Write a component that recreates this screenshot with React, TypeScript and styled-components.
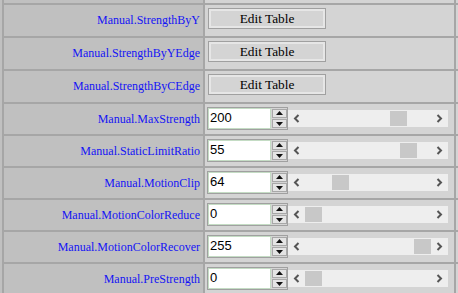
import React from 'react';
import styled, { createGlobalStyle } from 'styled-components';

const GlobalStyle = createGlobalStyle`
	html, body {
		margin: 0;
		padding: 0;
		background: #c0c0c0;
		overflow: hidden;
	}
`;

type Param =
	| { kind: 'table'; name: string }
	| { kind: 'range'; name: string; value: number; max: number };

const params: Param[] = [
	{ kind: 'table', name: 'Manual.StrengthByY' },
	{ kind: 'table', name: 'Manual.StrengthByYEdge' },
	{ kind: 'table', name: 'Manual.StrengthByCEdge' },
	{ kind: 'range', name: 'Manual.MaxStrength', value: 200, max: 255 },
	{ kind: 'range', name: 'Manual.StaticLimitRatio', value: 55, max: 63 },
	{ kind: 'range', name: 'Manual.MotionClip', value: 64, max: 255 },
	{ kind: 'range', name: 'Manual.MotionColorReduce', value: 0, max: 255 },
	{ kind: 'range', name: 'Manual.MotionColorRecover', value: 255, max: 255 },
	{ kind: 'range', name: 'Manual.PreStrength', value: 0, max: 255 },
];

const THUMB_TRAVEL = 109;

const Table = styled.div`
	display: grid;
	grid-template-columns: 199px 249px 1fr;
	gap: 2px;
	margin: -28px 0 0 2px;
	padding-left: 2px;
	background: #a6a6a6;
`;

const LabelCell = styled.div<{ $h: number }>`
	height: ${({ $h }) => $h}px;
	background: #c0c0c0;
	display: flex;
	align-items: center;
	justify-content: flex-end;
	padding-right: 3px;
	font-family: 'Liberation Serif', 'Times New Roman', serif;
	font-size: 12px;
	color: #1414f5;
	white-space: nowrap;
`;

const ValueCell = styled.div<{ $h: number }>`
	height: ${({ $h }) => $h}px;
	background: #d4d4d4;
	display: flex;
	align-items: center;
	padding-left: 2px;
`;

const SpareCell = styled.div<{ $h: number }>`
	height: ${({ $h }) => $h}px;
	background: #d4d4d4;
`;

const EditButton = styled.button`
	box-sizing: border-box;
	width: 118px;
	height: 21px;
	margin: 0 0 4px 1px;
	padding: 0;
	border: 1px solid #a0a0a0;
	box-shadow: inset 0 0 0 2px #e6e6e6;
	background: #d4d4d4;
	font-family: 'Liberation Serif', 'Times New Roman', serif;
	font-size: 13.33px;
	color: #000;
	line-height: 17px;
`;

const Control = styled.div`
	display: flex;
	align-items: center;
	margin-bottom: 2px;
`;

const NumberBox = styled.div`
	box-sizing: border-box;
	display: flex;
	width: 81px;
	height: 23px;
	border: 1px solid #a0a0a0;
	background: #d4d4d4;
`;

const NumberField = styled.div`
	box-sizing: border-box;
	width: 63px;
	height: 21px;
	border: 1px solid #c4dcc4;
	background: #fff;
	font-family: 'Liberation Sans', Arial, sans-serif;
	font-size: 13px;
	line-height: 17px;
	padding-left: 1px;
	color: #000;
`;

const Spinner = styled.div`
	display: flex;
	flex-direction: column;
	justify-content: center;
	gap: 1px;
	margin-left: 1px;
`;

const SpinButton = styled.div`
	box-sizing: border-box;
	width: 15px;
	height: 9px;
	border: 1px solid #a8a8a8;
	background: #e4e4e4;
	display: flex;
	align-items: center;
	justify-content: center;
`;

const ScrollTrack = styled.div`
	display: flex;
	align-items: center;
	width: 160px;
	height: 17px;
	background: #eeeeee;
`;

const Arrow = styled.div`
	width: 17px;
	height: 17px;
	display: flex;
	align-items: center;
	justify-content: center;
`;

const ThumbArea = styled.div`
	flex: 1;
	display: flex;
	align-items: center;
	height: 17px;
`;

const Thumb = styled.div`
	width: 17px;
	height: 15px;
	background: #c8c8c8;
`;

function Chevron({ dir }: { dir: 'left' | 'right' }) {
	const pts = dir === 'left' ? '5,1 1.5,4.5 5,8' : '1,1 4.5,4.5 1,8';
	return (
		<svg width='7' height='9' viewBox='0 0 6 9'>
			<polyline points={pts} fill='none' stroke='#555' strokeWidth='2' />
		</svg>
	);
}

function Tri({ up }: { up?: boolean }) {
	return (
		<svg width='7' height='5' viewBox='0 0 7 5'>
			{up ? <polygon points='3.5,0 7,4 0,4' fill='#111' /> : <polygon points='0,1 7,1 3.5,5' fill='#111' />}
		</svg>
	);
}

function RangeControl({ value, max }: { value: number; max: number }) {
	const offset = Math.round((value / max) * THUMB_TRAVEL);
	return (
		<Control>
			<NumberBox>
				<NumberField>{value}</NumberField>
				<Spinner>
					<SpinButton>
						<Tri up />
					</SpinButton>
					<SpinButton>
						<Tri />
					</SpinButton>
				</Spinner>
			</NumberBox>
			<ScrollTrack>
				<Arrow>
					<Chevron dir='left' />
				</Arrow>
				<ThumbArea>
					<Thumb style={{ marginLeft: offset }} />
				</ThumbArea>
				<Arrow>
					<Chevron dir='right' />
				</Arrow>
			</ScrollTrack>
		</Control>
	);
}

export default function App() {
	return (
		<>
			<GlobalStyle />
			<Table>
				<LabelCell $h={31} />
				<ValueCell $h={31} />
				<SpareCell $h={31} />
				{params.map((p) => {
					const h = p.kind === 'table' ? 31 : 30;
					return (
						<React.Fragment key={p.name}>
							<LabelCell $h={h}>{p.name}</LabelCell>
							<ValueCell $h={h}>
								{p.kind === 'table' ? (
									<EditButton>Edit Table</EditButton>
								) : (
									<RangeControl value={p.value} max={p.max} />
								)}
							</ValueCell>
							<SpareCell $h={h} />
						</React.Fragment>
					);
				})}
			</Table>
		</>
	);
}
